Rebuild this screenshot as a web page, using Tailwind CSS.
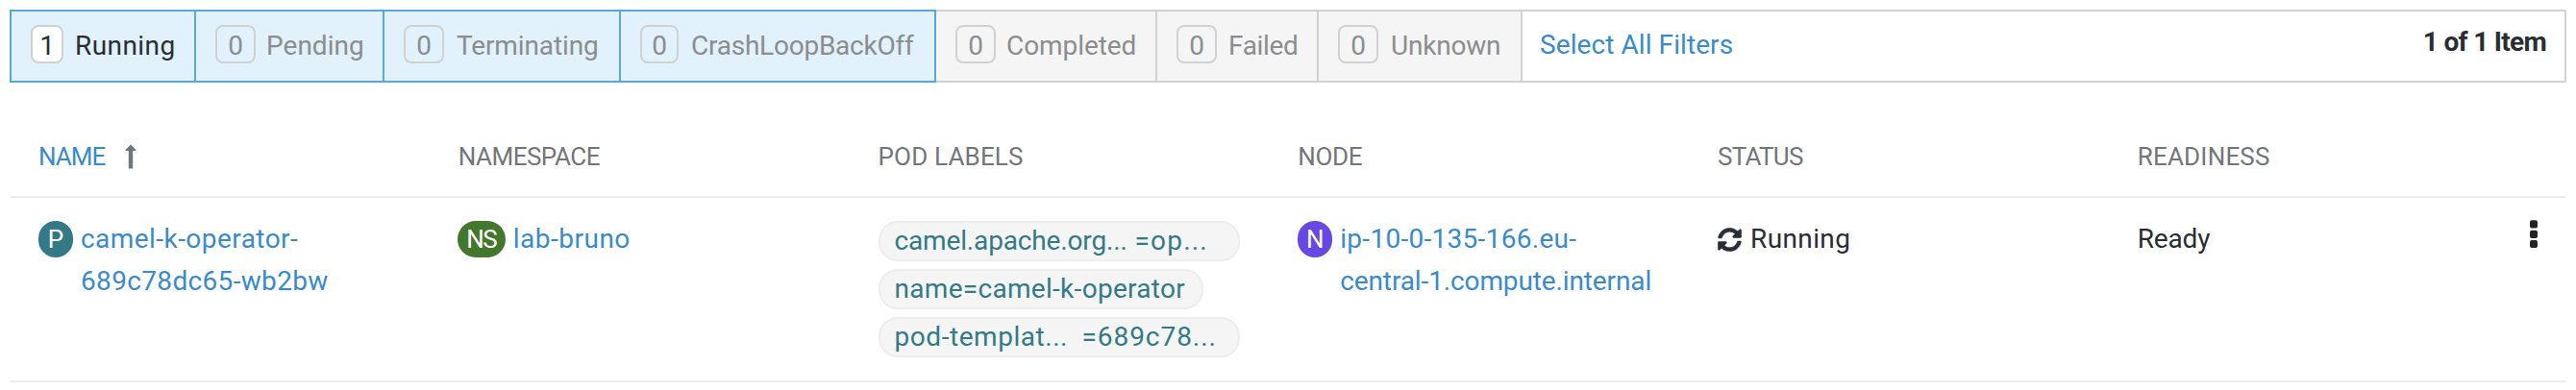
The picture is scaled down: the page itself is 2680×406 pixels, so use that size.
<!DOCTYPE html>
<html lang="en">
<head>
<meta charset="utf-8">
<title>Pods</title>
<script src="https://cdn.jsdelivr.net/npm/@tailwindcss/browser@4"></script>
</head>
<body class="w-[2680px] h-[406px] overflow-hidden bg-white font-[Roboto,sans-serif] text-[28px] leading-[44px] text-[#292e34] whitespace-nowrap">
<main class="pt-2.5 pl-2.5 pr-2.5">
  <!-- Status filters -->
  <div class="flex h-[76px]">
    <button class="flex items-center gap-3 w-[194px] border-2 border-[#58a8d9] bg-[#e1f2fc] pl-5">
      <span class="flex items-center justify-center mb-1 pt-1 w-[34px] h-10 rounded-lg border-2 border-[#d1d1d1] bg-white">1</span>
      <span class="tracking-[0.436px]">Running</span>
    </button>
    <button class="flex items-center gap-[11px] w-[196px] border-y-2 border-r-2 border-[#58a8d9] bg-[#e1f2fc] pl-5 text-[#8b8d8f]">
      <span class="flex items-center justify-center mb-1 pt-1 w-[42px] h-10 rounded-lg border-2 border-[#d1d1d1]">0</span>
      <span class="tracking-[0.023px]">Pending</span>
    </button>
    <button class="flex items-center gap-[13px] w-[246px] border-y-2 border-r-2 border-[#58a8d9] bg-[#e1f2fc] pl-5 text-[#8b8d8f]">
      <span class="flex items-center justify-center mb-1 pt-1 w-[42px] h-10 rounded-lg border-2 border-[#d1d1d1]">0</span>
      <span class="tracking-[-0.118px]">Terminating</span>
    </button>
    <button class="flex items-center gap-[13px] w-[328px] border-y-2 border-r-2 border-[#58a8d9] bg-[#e1f2fc] pl-5 text-[#8b8d8f]">
      <span class="flex items-center justify-center mb-1 pt-1 w-10 h-10 rounded-lg border-2 border-[#d1d1d1]">0</span>
      <span class="tracking-[-0.235px]">CrashLoopBackOff</span>
    </button>
    <button class="flex items-center gap-[11px] w-[230px] border-y-2 border-r-2 border-[#d1d1d1] bg-[#f5f5f5] pl-5 text-[#8b8d8f]">
      <span class="flex items-center justify-center mb-1 pt-1 w-[42px] h-10 rounded-lg border-2 border-[#d1d1d1]">0</span>
      <span class="tracking-[-0.079px]">Completed</span>
    </button>
    <button class="flex items-center gap-3 w-[168px] border-y-2 border-r-2 border-[#d1d1d1] bg-[#f5f5f5] pl-5 text-[#8b8d8f]">
      <span class="flex items-center justify-center mb-1 pt-1 w-[42px] h-10 rounded-lg border-2 border-[#d1d1d1]">0</span>
      <span class="tracking-[-0.341px]">Failed</span>
    </button>
    <button class="flex items-center gap-[13px] w-[212px] border-y-2 border-r-2 border-[#d1d1d1] bg-[#f5f5f5] pl-5 text-[#8b8d8f]">
      <span class="flex items-center justify-center mb-1 pt-1 w-[42px] h-10 rounded-lg border-2 border-[#d1d1d1]">0</span>
      <span class="tracking-[-0.214px]">Unknown</span>
    </button>
    <div class="flex flex-1 items-center justify-between border-y-2 border-r-2 border-[#d1d1d1] pl-[18px] pr-[19px]">
      <a class="pb-[3px] text-[#3a8bcb] tracking-[0.08px]">Select All Filters</a>
      <span class="pb-2 font-bold tracking-[-0.7px]">1 of 1 Item</span>
    </div>
  </div>

  <!-- Table header -->
  <div class="mt-9 grid h-[84px] grid-cols-[repeat(5,436.75px)_1fr] items-center border-b-2 border-[#ededed] pl-[30px] text-[26px] text-[#72767b]">
    <div class="flex items-center">
      <span class="w-[90px] text-[#3a8bcb] tracking-[-0.979px]">NAME</span>
      <svg class="w-3 h-[26px]" viewBox="0 0 12 26" fill="#72767b"><path d="M6 0.5 11.6 6.2Q11.4 7 10.8 7H8.2V25.5H3.8V7H1.2Q.6 7 .4 6.2Z"/></svg>
    </div>
    <div class="tracking-[-0.506px]">NAMESPACE</div>
    <div class="tracking-[0.168px]">POD LABELS</div>
    <div class="tracking-[-0.3px]">NODE</div>
    <div class="tracking-[-0.729px]">STATUS</div>
    <div class="tracking-[0.2px]">READINESS</div>
  </div>

  <!-- Table row -->
  <div class="grid h-48 grid-cols-[repeat(5,436.75px)_1fr_auto] items-start border-b-2 border-[#ededed] pt-6 pl-[30px] pr-[30px]">
    <div class="flex items-start">
      <span class="flex h-[38px] w-9 items-center justify-center rounded-[19px] bg-[#337a86] text-[26px] text-white">P</span>
      <a class="-mt-[3px] ml-2 text-[#3a8bcb]"><span class="tracking-[0.449px]">camel-k-operator-</span><br><span class="tracking-[0.34px]">689c78dc65-wb2bw</span></a>
    </div>
    <div class="-ml-px flex items-start">
      <span class="flex h-[38px] w-[50px] items-center justify-center rounded-[19px] bg-[#44772e] text-[26px] tracking-[-1.4px] text-white">NS</span>
      <a class="-mt-[3px] ml-2 text-[#3a8bcb] tracking-[0.5px]">lab-bruno</a>
    </div>
    <div class="flex flex-col items-start gap-2 text-[#337a86]">
      <span class="flex h-[42px] w-[376px] items-center rounded-[20px] border-2 border-[#ededed] bg-[#f5f5f5] pl-[15px]"><span class="w-[250px] tracking-[-0.148px]">camel.apache.org...</span><span class="tracking-[1.2px]">=op...</span></span>
      <span class="flex h-[42px] w-[338px] items-center rounded-[20px] border-2 border-[#ededed] bg-[#f5f5f5] pl-[15px] tracking-[0.3px]">name=camel-k-operator</span>
      <span class="flex h-[42px] w-[376px] items-center rounded-[20px] border-2 border-[#ededed] bg-[#f5f5f5] pl-[15px]"><span class="w-[195px] tracking-[0.55px]">pod-templat...</span><span class="tracking-[0.948px]">=689c78...</span></span>
    </div>
    <div class="flex items-start">
      <span class="flex h-[38px] w-9 items-center justify-center rounded-[19px] bg-[#6848e2] text-[26px] text-white">N</span>
      <a class="-mt-[3px] ml-2 text-[#3a8bcb]"><span class="tracking-[0.29px]">ip-10-0-135-166.eu-</span><br><span class="tracking-[-0.12px]">central-1.compute.internal</span></a>
    </div>
    <div class="-mt-[3px] flex items-center">
      <svg class="h-[25px] w-[25px]" viewBox="0 0 512 512" fill="#292e34" stroke="#292e34" stroke-width="12"><path d="M370.72 133.28C339.458 104.008 298.888 87.962 255.848 88c-77.458.068-144.328 53.178-162.791 126.85-1.344 5.363-6.122 9.15-11.651 9.15H24.103c-7.498 0-13.194-6.807-11.807-14.176C33.933 94.924 134.813 8 256 8c66.448 0 126.791 26.136 171.315 68.685L463.03 40.97C478.149 25.851 504 36.559 504 57.941V192c0 13.255-10.745 24-24 24H345.941c-21.382 0-32.09-25.851-16.971-40.971l41.75-41.749zM32 296h134.059c21.382 0 32.09 25.851 16.971 40.971l-41.75 41.75c31.262 29.273 71.835 45.319 114.876 45.28 77.418-.07 144.315-53.144 162.787-126.849 1.344-5.363 6.122-9.15 11.651-9.15h57.304c7.498 0 13.194 6.807 11.807 14.176C478.067 417.076 377.187 504 256 504c-66.448 0-126.791-26.136-171.315-68.685L48.97 471.03C33.851 486.149 8 475.441 8 454.059V320c0-13.255 10.745-24 24-24z"/></svg>
      <span class="ml-[9px] tracking-[0.38px]">Running</span>
    </div>
    <div class="-mt-[3px] tracking-[-0.156px]">Ready</div>
    <svg class="-mt-px h-[30px] w-2" viewBox="0 0 8 30" fill="#242424"><rect y="0.3" width="8" height="8.2" rx="2"/><rect y="10.7" width="8" height="8.2" rx="2"/><rect y="20.9" width="8" height="8.2" rx="2"/></svg>
  </div>
</main>
</body>
</html>
